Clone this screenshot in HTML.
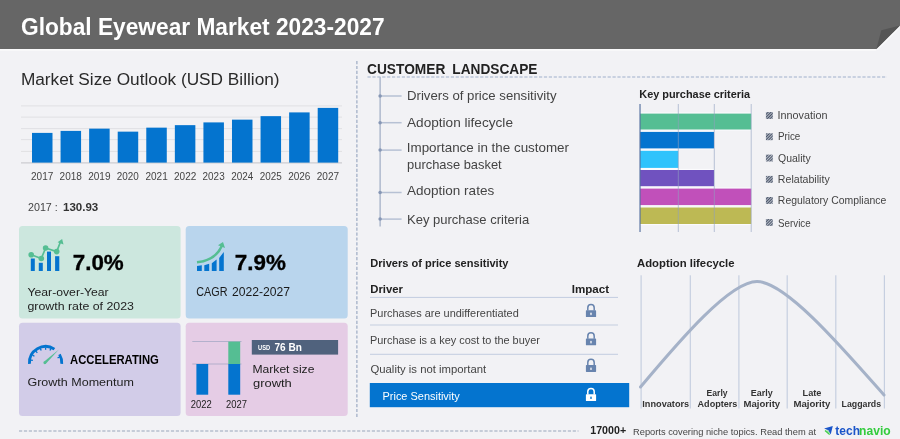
<!DOCTYPE html>
<html><head><meta charset="utf-8"><title>Global Eyewear Market 2023-2027</title>
<style>
html,body{margin:0;padding:0;}
body{width:900px;height:439px;position:relative;overflow:hidden;background:#f2f2f5;font-family:"Liberation Sans", sans-serif;}
svg.bg{position:absolute;left:0;top:0;}
#txt{position:absolute;left:0;top:0;width:900px;height:439px;will-change:transform;}
.t{position:absolute;left:0;top:0;white-space:pre;line-height:1;transform-origin:0 0;display:block;}
</style></head><body>
<svg class="bg" width="900" height="439" viewBox="0 0 900 439">
<defs><pattern id="hatch" width="2" height="2" patternUnits="userSpaceOnUse" patternTransform="rotate(45)"><rect width="2" height="2" fill="#c3c8d2"/><rect width="1.1" height="2" fill="#4b566a"/></pattern><linearGradient id="hs" x1="0" y1="0" x2="0" y2="1"><stop offset="0" stop-color="#000" stop-opacity="0.18"/><stop offset="1" stop-color="#000" stop-opacity="0"/></linearGradient></defs>
<rect x="0" y="49.05" width="876.4" height="1.6" fill="#fafafb"/>
<polygon points="0,0 900,0 900,25.5 876.4,49.05 0,49.05" fill="#666666"/>
<line x1="877.2" y1="49.7" x2="900.6" y2="26.3" stroke="#fafafb" stroke-width="1.3"/>
<polygon points="876.4,49.05 881.3,30.3 900,25.5" fill="#555555"/>
<rect x="21" y="105.4" width="321" height="1" fill="#e0e0e3"/>
<rect x="21" y="116.65" width="321" height="1" fill="#e0e0e3"/>
<rect x="21" y="128.15" width="321" height="1" fill="#e0e0e3"/>
<rect x="21" y="139.15" width="321" height="1" fill="#e0e0e3"/>
<rect x="21" y="150.9" width="321" height="1" fill="#e0e0e3"/>
<rect x="21" y="162.4" width="321" height="1" fill="#c4c4c8"/>
<rect x="32.00" y="132.9" width="20.5" height="29.70" fill="#0474cf"/>
<rect x="60.57" y="130.9" width="20.5" height="31.70" fill="#0474cf"/>
<rect x="89.14" y="128.65" width="20.5" height="33.95" fill="#0474cf"/>
<rect x="117.71" y="131.65" width="20.5" height="30.95" fill="#0474cf"/>
<rect x="146.28" y="127.65" width="20.5" height="34.95" fill="#0474cf"/>
<rect x="174.85" y="125.15" width="20.5" height="37.45" fill="#0474cf"/>
<rect x="203.42" y="122.4" width="20.5" height="40.20" fill="#0474cf"/>
<rect x="231.99" y="119.65" width="20.5" height="42.95" fill="#0474cf"/>
<rect x="260.56" y="116.15" width="20.5" height="46.45" fill="#0474cf"/>
<rect x="289.13" y="112.4" width="20.5" height="50.20" fill="#0474cf"/>
<rect x="317.70" y="107.9" width="20.5" height="54.70" fill="#0474cf"/>
<rect x="19" y="226" width="161.6" height="92.6" rx="3.5" fill="#cce7de"/>
<rect x="185.7" y="226" width="162" height="92.6" rx="3.5" fill="#b9d5ed"/>
<rect x="19" y="322.7" width="161.6" height="93.3" rx="3.5" fill="#d2cce8"/>
<rect x="185.7" y="322.7" width="162" height="93.3" rx="3.5" fill="#e5cce5"/>
<line x1="356.9" y1="61" x2="356.9" y2="417" stroke="#95a4bf" stroke-width="1.1" stroke-dasharray="3.2 1.7"/>
<line x1="19" y1="431" x2="578.5" y2="431" stroke="#98a5bb" stroke-width="1.1" stroke-dasharray="3.2 1.7"/>
<line x1="367.5" y1="77" x2="887" y2="77" stroke="#9fb0cc" stroke-width="1.1" stroke-dasharray="3.2 1.7"/>
<rect x="30.8" y="258.5" width="4.00" height="12.50" fill="#0474cf"/>
<rect x="38.8" y="262.8" width="4.00" height="8.20" fill="#0474cf"/>
<rect x="47" y="251.6" width="4.00" height="19.40" fill="#0474cf"/>
<rect x="55.1" y="256.2" width="4.20" height="14.80" fill="#0474cf"/>
<polyline points="31.2,254.8 41.3,258.5 45.6,248 56.7,251.6 60.6,241.5" fill="none" stroke="#55be93" stroke-width="1.7" stroke-linejoin="round"/>
<circle cx="31.2" cy="254.8" r="2.8" fill="#55be93"/>
<circle cx="41.3" cy="258.5" r="2.8" fill="#55be93"/>
<circle cx="45.6" cy="248" r="2.8" fill="#55be93"/>
<circle cx="56.7" cy="251.6" r="2.8" fill="#55be93"/>
<polygon points="62.1,238.9 57.6,242.3 63.5,244.6" fill="#55be93"/>
<polygon points="197,265.9 201.8,265.3 201.8,271.1 197,271.1" fill="#0474cf"/>
<polygon points="204.3,265.2 209.2,263.7 209.2,271.1 204.3,271.1" fill="#0474cf"/>
<polygon points="211.8,263.2 216.6,259.6 216.6,271.1 211.8,271.1" fill="#0474cf"/>
<polygon points="219.2,258 223.8,251.9 223.8,271.1 219.2,271.1" fill="#0474cf"/>
<path d="M197,262.3 C209,261 218,255 222,245.5" fill="none" stroke="#55be93" stroke-width="2.5"/>
<polygon points="223,242 218,245.3 225,248" fill="#55be93"/>
<path d="M29.44,363.83 A16.2,16.2 0 0 1 54.42,349.11" fill="none" stroke="#0474cf" stroke-width="2.8"/>
<path d="M59.49,354.36 A16.2,16.2 0 0 1 61.76,363.83" fill="none" stroke="#0474cf" stroke-width="2.8"/>
<line x1="30.63" y1="360.06" x2="32.90" y2="360.46" stroke="#0474cf" stroke-width="1.3"/>
<line x1="32.44" y1="355.10" x2="34.43" y2="356.25" stroke="#0474cf" stroke-width="1.3"/>
<line x1="35.83" y1="351.06" x2="37.31" y2="352.82" stroke="#0474cf" stroke-width="1.3"/>
<line x1="40.40" y1="348.42" x2="41.19" y2="350.58" stroke="#0474cf" stroke-width="1.3"/>
<line x1="45.60" y1="347.50" x2="45.60" y2="349.80" stroke="#0474cf" stroke-width="1.3"/>
<line x1="50.80" y1="348.42" x2="50.01" y2="350.58" stroke="#0474cf" stroke-width="1.3"/>
<line x1="59.69" y1="357.01" x2="57.56" y2="357.87" stroke="#0474cf" stroke-width="1.3"/>
<polygon points="58.9,349.4 45.6,364 43.6,362" fill="#55be93"/>
<circle cx="44.8" cy="362.8" r="1.4" fill="#55be93"/>
<rect x="192.3" y="341.2" width="49.2" height="0.8" fill="#a7a9c6"/>
<rect x="192.3" y="363.6" width="49.2" height="0.8" fill="#a7a9c6"/>
<rect x="196.4" y="364" width="11.8" height="30.7" fill="#0474cf"/>
<rect x="228.3" y="364" width="11.9" height="30.7" fill="#0474cf"/>
<rect x="228.3" y="341.6" width="11.9" height="22.4" fill="#55be93"/>
<rect x="251.8" y="340" width="86.3" height="14.6" fill="#50627d"/>
<rect x="379.3" y="77" width="1.7" height="149.5" fill="#b7c0d2"/>
<rect x="380" y="95.25" width="21.6" height="1.5" fill="#b7c1d4"/>
<circle cx="380.1" cy="96" r="1.75" fill="#8797b5"/>
<rect x="380" y="121.95" width="21.6" height="1.5" fill="#b7c1d4"/>
<circle cx="380.1" cy="122.7" r="1.75" fill="#8797b5"/>
<rect x="380" y="149.35" width="21.6" height="1.5" fill="#b7c1d4"/>
<circle cx="380.1" cy="150.1" r="1.75" fill="#8797b5"/>
<rect x="380" y="191.75" width="21.6" height="1.5" fill="#b7c1d4"/>
<circle cx="380.1" cy="192.5" r="1.75" fill="#8797b5"/>
<rect x="380" y="218.35" width="21.6" height="1.5" fill="#b7c1d4"/>
<circle cx="380.1" cy="219.1" r="1.75" fill="#8797b5"/>
<rect x="640" y="112.50" width="111.20" height="18.10" fill="#fbfbfd"/>
<rect x="640" y="113.6" width="111.20" height="15.90" fill="#55be93"/>
<rect x="640" y="130.80" width="74.00" height="18.70" fill="#fbfbfd"/>
<rect x="640" y="131.9" width="74.00" height="16.50" fill="#0474cf"/>
<rect x="640" y="149.70" width="38.30" height="19.30" fill="#fbfbfd"/>
<rect x="640" y="150.8" width="38.30" height="17.10" fill="#2fc3fc"/>
<rect x="640" y="168.90" width="74.00" height="18.40" fill="#fbfbfd"/>
<rect x="640" y="170" width="74.00" height="16.20" fill="#7052bf"/>
<rect x="640" y="187.50" width="111.20" height="18.70" fill="#fbfbfd"/>
<rect x="640" y="188.6" width="111.20" height="16.50" fill="#c150ba"/>
<rect x="640" y="206.40" width="111.20" height="18.70" fill="#fbfbfd"/>
<rect x="640" y="207.5" width="111.20" height="16.50" fill="#bdb954"/>
<rect x="677.8" y="104" width="1" height="128" fill="#8fa0c0" opacity="0.6"/>
<rect x="713.8" y="104" width="1" height="128" fill="#8fa0c0" opacity="0.6"/>
<rect x="750.7" y="104" width="1" height="128" fill="#8fa0c0" opacity="0.6"/>
<rect x="639.45" y="104" width="1.15" height="128" fill="#56719f"/>
<rect x="765.9" y="112" width="6.9" height="6.9" fill="url(#hatch)"/>
<rect x="765.9" y="133.3" width="6.9" height="6.9" fill="url(#hatch)"/>
<rect x="765.9" y="154.6" width="6.9" height="6.9" fill="url(#hatch)"/>
<rect x="765.9" y="175.9" width="6.9" height="6.9" fill="url(#hatch)"/>
<rect x="765.9" y="197" width="6.9" height="6.9" fill="url(#hatch)"/>
<rect x="765.9" y="219" width="6.9" height="6.9" fill="url(#hatch)"/>
<rect x="370" y="296.9" width="248" height="1" fill="#c3cde0"/>
<rect x="370" y="324.5" width="248" height="1" fill="#c3cde0"/>
<rect x="370" y="353.8" width="248" height="1" fill="#c3cde0"/>
<rect x="369.8" y="383" width="259.4" height="24.2" fill="#0474cf"/>
<g><path d="M587.8,310.6 V307.7 A3.2,3.2 0 0 1 594.1999999999999,307.7 V310.6" fill="none" stroke="#6884ae" stroke-width="1.5"/><rect x="585.9" y="310.3" width="10.2" height="6.8" rx="0.6" fill="#6884ae"/><rect x="590.3" y="312.6" width="1.4" height="2.6" rx="0.6" fill="#f2f2f5"/></g>
<g><path d="M587.8,338.8 V335.9 A3.2,3.2 0 0 1 594.1999999999999,335.9 V338.8" fill="none" stroke="#6884ae" stroke-width="1.5"/><rect x="585.9" y="338.5" width="10.2" height="6.8" rx="0.6" fill="#6884ae"/><rect x="590.3" y="340.8" width="1.4" height="2.6" rx="0.6" fill="#f2f2f5"/></g>
<g><path d="M587.8,365.40000000000003 V362.5 A3.2,3.2 0 0 1 594.1999999999999,362.5 V365.40000000000003" fill="none" stroke="#6884ae" stroke-width="1.5"/><rect x="585.9" y="365.1" width="10.2" height="6.8" rx="0.6" fill="#6884ae"/><rect x="590.3" y="367.40000000000003" width="1.4" height="2.6" rx="0.6" fill="#f2f2f5"/></g>
<g><path d="M587.8,394.5 V391.59999999999997 A3.2,3.2 0 0 1 594.1999999999999,391.59999999999997 V394.5" fill="none" stroke="#ffffff" stroke-width="1.5"/><rect x="585.9" y="394.2" width="10.2" height="6.8" rx="0.6" fill="#ffffff"/><rect x="590.3" y="396.5" width="1.4" height="2.6" rx="0.6" fill="#0474cf"/></g>
<rect x="640.5" y="275.3" width="1.2" height="133.2" fill="#c6cfe0"/>
<rect x="689.6999999999999" y="275.3" width="1.2" height="133.2" fill="#c6cfe0"/>
<rect x="738.3" y="275.3" width="1.2" height="133.2" fill="#c6cfe0"/>
<rect x="786.6" y="275.3" width="1.2" height="133.2" fill="#c6cfe0"/>
<rect x="835.1999999999999" y="275.3" width="1.2" height="133.2" fill="#c6cfe0"/>
<rect x="883.8" y="275.3" width="1.2" height="133.2" fill="#c6cfe0"/>
<path d="M640.5,387 C680,340 730,281.5 757,281.5 C785,281.5 840,345 884,395" fill="none" stroke="#a5b2c8" stroke-width="3" stroke-linecap="round"/>
<polygon points="824.1,428.4 832.8,425.9 830.7,434.4 828.4,430.2" fill="#1b55c9"/>
<line x1="825" y1="430.5" x2="829.6" y2="434.7" stroke="#33cc3d" stroke-width="1.1"/>
<line x1="826.6" y1="430.3" x2="829.9" y2="433.3" stroke="#33cc3d" stroke-width="0.8"/>
</svg>
<div id="txt">
<span class="t" id="t0" style="font-size:23px;color:#fff;font-weight:bold;transform:translate(21.01px,15.58px) scaleX(0.9872);">Global Eyewear Market 2023-2027</span>
<span class="t" id="t1" style="font-size:15.8px;color:#2a2a2a;transform:translate(20.88px,71.68px) scaleX(1.0914);">Market Size Outlook (USD Billion)</span>
<span class="t" id="t2" style="font-size:10px;color:#444;transform:translate(31.00px,171.59px) scaleX(1.0026);">2017</span>
<span class="t" id="t3" style="font-size:10px;color:#444;transform:translate(59.60px,171.59px) scaleX(1.0024);">2018</span>
<span class="t" id="t4" style="font-size:10px;color:#444;transform:translate(88.20px,171.59px) scaleX(1.0024);">2019</span>
<span class="t" id="t5" style="font-size:10px;color:#444;transform:translate(116.81px,171.59px) scaleX(0.9906);">2020</span>
<span class="t" id="t6" style="font-size:10px;color:#444;transform:translate(145.40px,171.59px) scaleX(1.0026);">2021</span>
<span class="t" id="t7" style="font-size:10px;color:#444;transform:translate(174.00px,171.59px) scaleX(1.0024);">2022</span>
<span class="t" id="t8" style="font-size:10px;color:#444;transform:translate(202.60px,171.59px) scaleX(0.9906);">2023</span>
<span class="t" id="t9" style="font-size:10px;color:#444;transform:translate(231.20px,171.59px) scaleX(0.9908);">2024</span>
<span class="t" id="t10" style="font-size:10px;color:#444;transform:translate(259.80px,171.59px) scaleX(0.9908);">2025</span>
<span class="t" id="t11" style="font-size:10px;color:#444;transform:translate(288.15px,171.59px) scaleX(1.0024);">2026</span>
<span class="t" id="t12" style="font-size:10px;color:#444;transform:translate(316.75px,171.59px) scaleX(1.0026);">2027</span>
<span class="t" id="t13" style="font-size:11px;color:#444;transform:translate(28.01px,201.74px) scaleX(0.9724);">2017 :</span>
<span class="t" id="t14" style="font-size:11.5px;color:#333;font-weight:bold;transform:translate(63.00px,202.32px) scaleX(1.0030);">130.93</span>
<span class="t" id="t15" style="font-size:22.2px;color:#000;font-weight:bold;transform:translate(72.74px,252.26px) scaleX(1.0082);-webkit-text-stroke:0.35px #000;">7.0%</span>
<span class="t" id="t16" style="font-size:11.5px;color:#222;transform:translate(27.48px,287.32px) scaleX(1.0612);">Year-over-Year</span>
<span class="t" id="t17" style="font-size:11.5px;color:#222;transform:translate(27.47px,301.32px) scaleX(1.0738);">growth rate of 2023</span>
<span class="t" id="t18" style="font-size:22.2px;color:#000;font-weight:bold;transform:translate(234.74px,252.26px) scaleX(1.0112);-webkit-text-stroke:0.35px #000;">7.9%</span>
<span class="t" id="t19" style="font-size:12px;color:#1a1a1a;transform:translate(196.30px,285.89px) scaleX(0.8994);">CAGR</span>
<span class="t" id="t20" style="font-size:12px;color:#1a1a1a;transform:translate(232.05px,285.89px) scaleX(1.0116);">2022-2027</span>
<span class="t" id="t21" style="font-size:12px;color:#000;font-weight:bold;transform:translate(70.02px,353.89px) scaleX(0.9405);">ACCELERATING</span>
<span class="t" id="t22" style="font-size:11.5px;color:#222;transform:translate(27.46px,377.32px) scaleX(1.0881);">Growth Momentum</span>
<span class="t" id="t23" style="font-size:7px;color:#fff;font-weight:bold;transform:translate(258.03px,344.12px) scaleX(0.8175);">USD</span>
<span class="t" id="t24" style="font-size:10.5px;color:#fff;font-weight:bold;transform:translate(274.47px,342.16px) scaleX(0.9579);">76 Bn</span>
<span class="t" id="t25" style="font-size:11.5px;color:#222;transform:translate(252.45px,364.32px) scaleX(1.0539);">Market size</span>
<span class="t" id="t26" style="font-size:11.5px;color:#222;transform:translate(252.96px,378.32px) scaleX(1.1239);">growth</span>
<span class="t" id="t27" style="font-size:10px;color:#222;transform:translate(190.78px,399.59px) scaleX(0.9412);">2022</span>
<span class="t" id="t28" style="font-size:10px;color:#222;transform:translate(226.03px,399.59px) scaleX(0.9412);">2027</span>
<span class="t" id="t29" style="font-size:14px;color:#222;font-weight:bold;transform:translate(367.01px,62.20px) scaleX(0.9804);">CUSTOMER</span>
<span class="t" id="t30" style="font-size:14px;color:#222;font-weight:bold;transform:translate(452.27px,62.20px) scaleX(0.9773);">LANDSCAPE</span>
<span class="t" id="t31" style="font-size:13.5px;color:#444;transform:translate(407.02px,88.62px) scaleX(0.9766);">Drivers of price sensitivity</span>
<span class="t" id="t32" style="font-size:13.5px;color:#444;transform:translate(407.00px,115.62px) scaleX(1.0086);">Adoption lifecycle</span>
<span class="t" id="t33" style="font-size:13.5px;color:#444;transform:translate(406.76px,140.62px) scaleX(0.9920);">Importance in the customer</span>
<span class="t" id="t34" style="font-size:13.5px;color:#444;transform:translate(407.04px,157.62px) scaleX(0.9556);">purchase basket</span>
<span class="t" id="t35" style="font-size:13.5px;color:#444;transform:translate(407.00px,183.62px) scaleX(1.0012);">Adoption rates</span>
<span class="t" id="t36" style="font-size:13.5px;color:#444;transform:translate(407.04px,212.62px) scaleX(0.9634);">Key purchase criteria</span>
<span class="t" id="t37" style="font-size:11.3px;color:#222;font-weight:bold;transform:translate(639.28px,89.48px) scaleX(0.9646);">Key purchase criteria</span>
<span class="t" id="t38" style="font-size:11.5px;color:#444;transform:translate(777.56px,110.32px) scaleX(0.9395);">Innovation</span>
<span class="t" id="t39" style="font-size:11.5px;color:#444;transform:translate(777.90px,131.32px) scaleX(0.8532);">Price</span>
<span class="t" id="t40" style="font-size:11.5px;color:#444;transform:translate(778.05px,153.32px) scaleX(0.9107);">Quality</span>
<span class="t" id="t41" style="font-size:11.5px;color:#444;transform:translate(777.83px,174.32px) scaleX(0.9218);">Relatability</span>
<span class="t" id="t42" style="font-size:11.5px;color:#444;transform:translate(777.85px,195.32px) scaleX(0.9072);">Regulatory Compliance</span>
<span class="t" id="t43" style="font-size:11.5px;color:#444;transform:translate(778.08px,218.32px) scaleX(0.8497);">Service</span>
<span class="t" id="t44" style="font-size:11.3px;color:#222;font-weight:bold;transform:translate(370.27px,258.48px) scaleX(0.9786);">Drivers of price sensitivity</span>
<span class="t" id="t45" style="font-size:11.3px;color:#222;font-weight:bold;transform:translate(370.25px,284.48px) scaleX(1.0032);">Driver</span>
<span class="t" id="t46" style="font-size:11.3px;color:#222;font-weight:bold;transform:translate(571.73px,284.48px) scaleX(1.0254);">Impact</span>
<span class="t" id="t47" style="font-size:11px;color:#444;transform:translate(370.00px,307.74px) scaleX(0.9943);">Purchases are undifferentiated</span>
<span class="t" id="t48" style="font-size:11px;color:#444;transform:translate(370.01px,334.74px) scaleX(0.9924);">Purchase is a key cost to the buyer</span>
<span class="t" id="t49" style="font-size:11px;color:#444;transform:translate(370.48px,363.74px) scaleX(1.0286);">Quality is not important</span>
<span class="t" id="t50" style="font-size:11px;color:#fff;transform:translate(382.50px,390.74px) scaleX(0.9954);">Price Sensitivity</span>
<span class="t" id="t51" style="font-size:11.3px;color:#222;font-weight:bold;transform:translate(637.00px,258.48px) scaleX(1.0021);">Adoption lifecycle</span>
<span class="t" id="t52" style="font-size:9.8px;color:#333;font-weight:bold;transform:translate(642.29px,398.75px) scaleX(0.9358);">Innovators</span>
<span class="t" id="t53" style="font-size:9.8px;color:#333;font-weight:bold;transform:translate(706.58px,387.75px) scaleX(0.8753);">Early</span>
<span class="t" id="t54" style="font-size:9.8px;color:#333;font-weight:bold;transform:translate(697.51px,398.75px) scaleX(0.9283);">Adopters</span>
<span class="t" id="t55" style="font-size:9.8px;color:#333;font-weight:bold;transform:translate(750.82px,387.75px) scaleX(0.9130);">Early</span>
<span class="t" id="t56" style="font-size:9.8px;color:#333;font-weight:bold;transform:translate(743.52px,398.75px) scaleX(0.9742);">Majority</span>
<span class="t" id="t57" style="font-size:9.8px;color:#333;font-weight:bold;transform:translate(802.54px,387.75px) scaleX(0.9352);">Late</span>
<span class="t" id="t58" style="font-size:9.8px;color:#333;font-weight:bold;transform:translate(793.51px,398.75px) scaleX(0.9796);">Majority</span>
<span class="t" id="t59" style="font-size:9.8px;color:#333;font-weight:bold;transform:translate(841.57px,398.75px) scaleX(0.8965);">Laggards</span>
<span class="t" id="t60" style="font-size:10.7px;color:#222;font-weight:bold;transform:translate(590.25px,424.99px) scaleX(0.9969);">17000+</span>
<span class="t" id="t61" style="font-size:9.8px;color:#444;transform:translate(633.04px,426.75px) scaleX(0.9490);">Reports covering niche topics. Read them at</span>
<span class="t" id="t62" style="font-size:12.2px;color:#1b55c9;font-weight:bold;transform:translate(835.25px,424.72px) scaleX(0.9876);">tech</span>
<span class="t" id="t63" style="font-size:12.2px;color:#33cc3d;font-weight:bold;transform:translate(859.11px,424.72px) scaleX(0.9915);">navio</span>
</div>
</body></html>
